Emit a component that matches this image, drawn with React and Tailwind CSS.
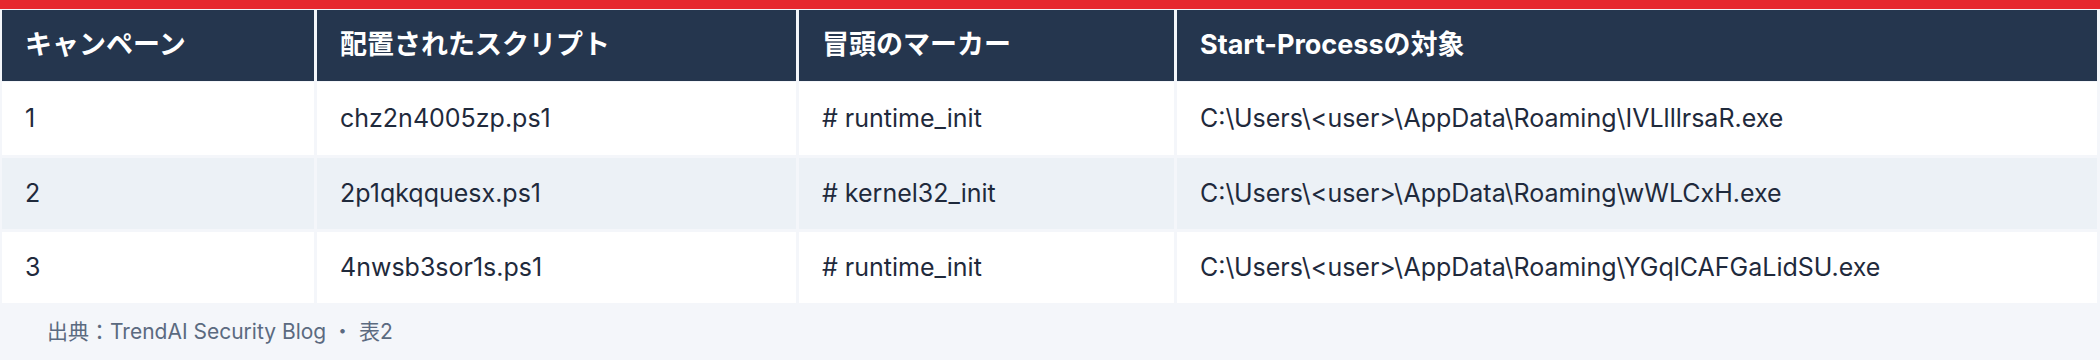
import React from "react";

const rows = [
  ["1", "chz2n4005zp.ps1", "# runtime_init", "C:\\Users\\<user>\\AppData\\Roaming\\IVLlllrsaR.exe"],
  ["2", "2p1qkqquesx.ps1", "# kernel32_init", "C:\\Users\\<user>\\AppData\\Roaming\\wWLCxH.exe"],
  ["3", "4nwsb3sor1s.ps1", "# runtime_init", "C:\\Users\\<user>\\AppData\\Roaming\\YGqlCAFGaLidSU.exe"],
];

const headers = ["キャンペーン", "配置されたスクリプト", "冒頭のマーカー", "Start-Processの対象"];

export default function App() {
  return (
    <div className="w-[2100px] h-[360px] bg-[#f4f6fa] font-['Inter','Noto_Sans_CJK_JP',sans-serif]">
      <div className="h-[9px] bg-[#e6292f]" />
      <div className="pt-[1px] pl-[2px] pr-[3px]">
        <div className="grid grid-cols-[312px_479px_375px_1fr] gap-x-[3px] h-[71px]">
          {headers.map((h) => (
            <div key={h} className="bg-[#25364e] text-white text-[27px] font-bold flex items-center pl-[23px]">
              {h}
            </div>
          ))}
        </div>
        {rows.map((r, i) => (
          <div
            key={i}
            className={
              "grid grid-cols-[312px_479px_375px_1fr] gap-x-[3px] " +
              (i === 0 ? "mt-[1px] h-[73px]" : "mt-[3px] h-[71px]")
            }
          >
            {r.map((c, j) => (
              <div
                key={j}
                className={
                  (i === 1 ? "bg-[#ecf1f6] " : "bg-white ") +
                  "text-[#1f2a3c] text-[25px] flex items-center pl-[23px]"
                }
              >
                {c}
              </div>
            ))}
          </div>
        ))}
      </div>
      <div className="pt-[14px] pl-[47px] text-[21px] leading-[30px] text-[#5b6a80]">
        出典：TrendAI Security Blog ・ 表2
      </div>
    </div>
  );
}
